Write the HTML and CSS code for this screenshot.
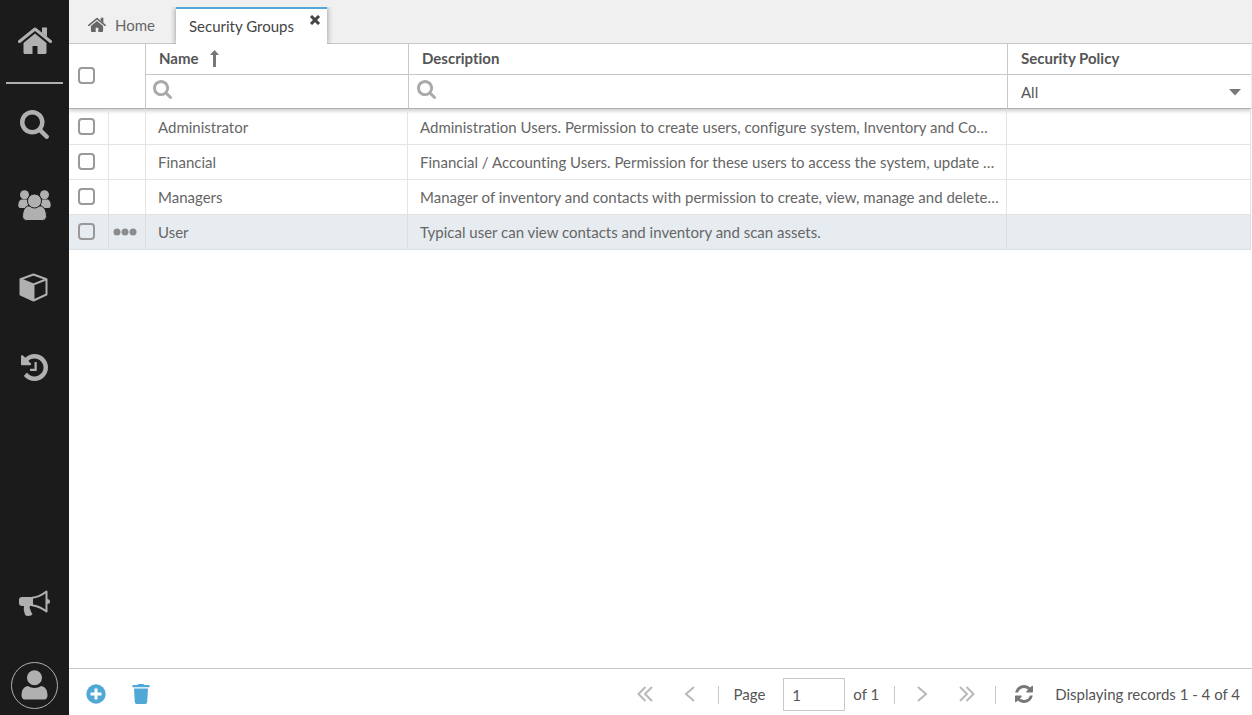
FILE: index.html
```
<!DOCTYPE html>
<html lang="en">
  <head>
    <meta charset="utf-8" />
    <meta name="viewport" content="width=device-width, initial-scale=1" />
    <title>Security Groups</title>
    <link rel="stylesheet" href="styles.css">
  </head>

  <body>
    <!-- shared icons -->
    <svg class="sprite" aria-hidden="true">
      <symbol id="icon-home" viewBox="0 0 34 28">
        <path d="M24 0.5h5v9.5l-5-4z" />
        <path d="M1.5 14.5L17 2l15.500 12.500" fill="none" stroke="currentColor" stroke-width="3" stroke-linecap="round" stroke-linejoin="round" />
        <path d="M17 6.500l11.500 9.500v9.500q0 1.500-1.500 1.500h-7.500v-8h-5v8H7q-1.500 0-1.500-1.500V16z" />
      </symbol>
      <symbol id="icon-search" viewBox="64 128 1664 1664">
        <path d="M1216 832q0-185-131.5-316.5t-316.5-131.5-316.5 131.5-131.5 316.5 131.5 316.5 316.5 131.5 316.5-131.5 131.5-316.5zm512 832q0 52-38 90t-90 38q-54 0-90-38l-343-342q-179 124-399 124-143 0-273.5-55.5t-225-150-150-225-55.5-273.5 55.5-273.5 150-225 225-150 273.5-55.5 273.5 55.5 225 150 150 225 55.5 273.5q0 220-124 399l343 343q37 37 37 90z" />
      </symbol>
    </svg>

    <div class="app">
      <nav class="sidebar" aria-label="Main">
        <a class="side-item" href="#" aria-label="Home">
          <svg width="34" height="28"><use href="#icon-home" /></svg>
        </a>
        <hr class="side-line" />
        <a class="side-item" href="#" aria-label="Search">
          <svg width="29" height="29"><use href="#icon-search" /></svg>
        </a>
        <a class="side-item" href="#" aria-label="Users">
          <svg width="34" height="31" viewBox="0 0 34 31">
            <circle cx="6.500" cy="4.800" r="4.500" />
            <circle cx="26.500" cy="4.800" r="4.500" />
            <path d="M3 9.500h7v8.500H2.500Q0.300 18 0.300 15.500 0.300 11 3 9.500z" />
            <path d="M30 9.500h-7v8.500h7.500q2.200 0 2.200-2.500 0-4.500-2.700-6z" />
            <g class="cutout">
              <path d="M9.500 16h14q5 2.500 5 10.500 0 4-4 4h-16q-4 0-4-4 0-8 5-10.500z" />
              <circle cx="16.500" cy="11" r="7" />
            </g>
          </svg>
        </a>
        <a class="side-item" href="#" aria-label="Inventory">
          <svg width="31" height="30" viewBox="0 -1 31 30">
            <path d="M14.500 1.500l13 4.800v15.200l-13 6-13-6V6.300z" fill="none" stroke="currentColor" stroke-width="2" stroke-linejoin="round" />
            <path d="M1.500 6.300l13 5.200v16l-13-6z" />
            <path d="M1.500 6.300l13 5.200 13-5.200M14.500 11.500v16" fill="none" stroke="currentColor" stroke-width="2" />
          </svg>
        </a>
        <a class="side-item" href="#" aria-label="History">
          <svg width="27" height="27" viewBox="128 128 1536 1536">
            <path d="M1664 896q0 156-61 298t-164 245-245 164-298 61q-172 0-327-72.5t-264-204.5q-7-10-6.5-22.5t8.500-20.5l137-138q10-9 25-9 16 2 23 12 73 95 179 147t225 52q104 0 198.500-40.5t163.500-109.5 109.500-163.5 40.500-198.5-40.500-198.5-109.500-163.5-163.500-109.5-198.500-40.5q-98 0-188 35.500t-160 101.500l137 138q31 30 14 69-17 40-59 40h-448q-26 0-45-19t-19-45v-448q0-42 40-59 39-17 69 14l130 129q107-101 244.500-156.500t284.500-55.500q156 0 298 61t245 164 164 245 61 298zm-640-288v448q0 14-9 23t-23 9h-320q-14 0-23-9t-9-23v-64q0-14 9-23t23-9h224v-352q0-14 9-23t23-9h64q14 0 23 9t9 23z" />
          </svg>
        </a>
        <a class="side-item side-news" href="#" aria-label="Announcements">
          <svg width="31" height="27" viewBox="0 0 31 27">
            <path d="M3 7h11v9H3q-3 0-3-3v-3q0-3 3-3z" />
            <path d="M13 7.800Q20.500 7 27.500 1.500v20Q20.500 16 13 15.200" fill="none" stroke="currentColor" stroke-width="2" stroke-linejoin="round" />
            <path d="M5 15h6q-1 3 0.500 5 0 1.500 2 4-1 2-4 2t-3.500-1.500Q4 20 5 15zM28 9q3 0 3 2.500T28 14z" />
          </svg>
        </a>
        <button class="avatar" type="button" aria-label="My account">
          <svg width="27" height="31" viewBox="0 0 28 32">
            <circle cx="14" cy="8" r="7.800" />
            <path d="M7 16.500q7 4 14 0 6.500 1.500 6.500 9 0 5-3.500 5H4q-3.500 0-3.500-5 0-7.500 6.500-9z" />
          </svg>
        </button>
      </nav>

      <main class="content">
        <div class="tabs">
          <a class="tab" href="#">
            <svg width="18" height="16"><use href="#icon-home" /></svg>
            Home
          </a>
          <div class="tab tab-active">
            <span>Security Groups</span>
            <button class="tab-close" type="button" aria-label="Close tab">
              <svg width="12" height="10" viewBox="0 0 12 10">
                <path d="M2 1l8 8M10 1L2 9" stroke="currentColor" stroke-width="3" />
              </svg>
            </button>
          </div>
        </div>

        <div class="grid">
          <table>
            <colgroup>
              <col class="col-check" />
              <col class="col-menu" />
              <col class="col-name" />
              <col />
              <col class="col-policy" />
            </colgroup>
            <thead>
              <tr class="titles">
                <th class="check-all" colspan="2" rowspan="2">
                  <input type="checkbox" aria-label="Select all" />
                </th>
                <th class="first">
                  <div class="title">
                    Name
                    <svg class="sort" width="9" height="17" viewBox="0 0 9 17">
                      <path d="M4.500 0L9 5H6v12H3V5H0z" />
                    </svg>
                  </div>
                </th>
                <th>Description</th>
                <th>Security Policy</th>
              </tr>
              <tr class="filters">
                <td class="first">
                  <label class="filter">
                    <svg width="19" height="19"><use href="#icon-search" /></svg>
                    <input type="text" aria-label="Filter by name" />
                  </label>
                </td>
                <td>
                  <label class="filter">
                    <svg width="19" height="19"><use href="#icon-search" /></svg>
                    <input type="text" aria-label="Filter by description" />
                  </label>
                </td>
                <td>
                  <div class="policy">
                    <select aria-label="Filter by security policy">
                      <option>All</option>
                    </select>
                    <svg width="12" height="7" viewBox="0 0 12 7"><path d="M0 0h12L6 6.500z" /></svg>
                  </div>
                </td>
              </tr>
            </thead>
            <tbody>
              <tr>
                <td class="check"><input type="checkbox" aria-label="Administrator" /></td>
                <td></td>
                <td>Administrator</td>
                <td>Administration Users. Permission to create users, configure system, Inventory and Co…</td>
                <td></td>
              </tr>
              <tr>
                <td class="check"><input type="checkbox" aria-label="Financial" /></td>
                <td></td>
                <td>Financial</td>
                <td>Financial / Accounting Users. Permission for these users to access the system, update …</td>
                <td></td>
              </tr>
              <tr>
                <td class="check"><input type="checkbox" aria-label="Managers" /></td>
                <td></td>
                <td>Managers</td>
                <td>Manager of inventory and contacts with permission to create, view, manage and delete…</td>
                <td></td>
              </tr>
              <tr class="current">
                <td class="check"><input type="checkbox" aria-label="User" /></td>
                <td class="menu">
                  <button type="button" aria-label="Row menu">
                    <svg width="24" height="8" viewBox="0 0 24 8">
                      <circle cx="4" cy="4" r="3.500" />
                      <circle cx="12" cy="4" r="3.500" />
                      <circle cx="20" cy="4" r="3.500" />
                    </svg>
                  </button>
                </td>
                <td>User</td>
                <td>Typical user can view contacts and inventory and scan assets.</td>
                <td></td>
              </tr>
            </tbody>
          </table>
        </div>

        <footer class="toolbar">
          <div class="actions">
            <button type="button" aria-label="Add">
              <svg width="20" height="20" viewBox="0 0 20 20">
                <circle cx="10" cy="10" r="9.700" />
                <path d="M10 4.500v11M4.500 10h11" stroke="#fff" stroke-width="3" />
              </svg>
            </button>
            <button type="button" aria-label="Delete">
              <svg width="18" height="20" viewBox="0 0 18 20">
                <path d="M0.500 1h5L6.500 0h5l1 1h5v2.300H0.500zM2 4.500h14l-0.800 13.500q-0.200 2-2 2H4.800q-1.800 0-2-2z" />
              </svg>
            </button>
          </div>
          <div class="pager">
            <button class="step" type="button" aria-label="First page">
              <svg width="16" height="16" viewBox="0 0 16 16"><path d="M8.500 1l-7 7 7 7M15 1L8 8l7 7" /></svg>
            </button>
            <button class="step" type="button" aria-label="Previous page">
              <svg width="16" height="16" viewBox="0 0 16 16"><path d="M12 1L4 8l8 7" /></svg>
            </button>
            <span class="sep"></span>
            <label class="page" for="page">Page</label>
            <input class="page-number" id="page" type="text" value="1" />
            <span class="page-count">of 1</span>
            <span class="sep"></span>
            <button class="step" type="button" aria-label="Next page">
              <svg width="16" height="16" viewBox="0 0 16 16"><path d="M4 1l8 7-8 7" /></svg>
            </button>
            <button class="step" type="button" aria-label="Last page">
              <svg width="16" height="16" viewBox="0 0 16 16"><path d="M1 1l7 7-7 7M7.500 1l7 7-7 7" /></svg>
            </button>
            <span class="sep"></span>
            <button class="refresh" type="button" aria-label="Refresh">
              <svg width="18" height="18" viewBox="128 128 1536 1536">
                <path d="M1639 1056q0 5-1 7-64 268-268 434.500t-478 166.500q-146 0-282.500-55t-243.500-157l-129 129q-19 19-45 19t-45-19-19-45v-448q0-26 19-45t45-19h448q26 0 45 19t19 45-19 45l-137 137q71 66 161 102t187 36q134 0 250-65t186-179q11-17 53-117 8-23 30-23h192q13 0 22.500 9.500t9.500 22.500zm25-800v448q0 26-19 45t-45 19h-448q-26 0-45-19t-19-45 19-45l138-138q-148-137-349-137-134 0-250 65t-186 179q-11 17-53 117-8 23-30 23h-199q-13 0-22.500-9.500t-9.500-22.500v-7q65-268 270-434.500t480-166.500q146 0 284 55.500t245 156.500l130-129q19-19 45-19t45 19 19 45z" />
              </svg>
            </button>
            <span>Displaying records 1 - 4 of 4</span>
          </div>
        </footer>
      </main>
    </div>
  </body>
</html>
```
FILE: styles.css
```
* {
  box-sizing: border-box;
}
body {
  margin: 0;
  font: 15px/20px Lato, sans-serif;
  font-variant-ligatures: none;
  color: #555;
}
svg {
  display: block;
  flex: none;
  fill: currentColor;
}
button {
  display: block;
  padding: 0;
  border: 0;
  background: none;
  color: inherit;
  cursor: pointer;
}
input,
select {
  font: inherit;
  color: inherit;
}
.sprite {
  display: none;
}
.app {
  display: flex;
  height: 100vh;
}

/* sidebar */
.sidebar {
  flex: none;
  display: flex;
  flex-direction: column;
  align-items: center;
  width: 69px;
  padding-bottom: 6px;
  background-color: #1b1b1b;
  color: #b0b0b0;
}
.side-item {
  display: flex;
  align-items: center;
  justify-content: center;
  width: 100%;
  height: 81px;
  color: inherit;
}
.side-line {
  width: 57px;
  height: 2px;
  margin: 1px 0 0;
  border: 0;
  background-color: #b0b0b0;
}
.side-news {
  margin-top: auto;
  margin-bottom: 18px;
}
.cutout {
  stroke: #1b1b1b;
  stroke-width: 1;
}
.avatar {
  display: flex;
  align-items: center;
  justify-content: center;
  width: 47px;
  height: 47px;
  border: 1px solid #b0b0b0;
  border-radius: 50%;
}

/* tabs */
.content {
  flex: 1;
  display: flex;
  flex-direction: column;
  min-width: 0;
}
.tabs {
  display: flex;
  align-items: flex-end;
  height: 44px;
  padding-left: 6px;
  border-bottom: 1px solid #c8c8c8;
  background-color: #f0f0f0;
}
.tab {
  display: flex;
  align-items: center;
  gap: 9px;
  height: 36px;
  padding: 0 21px 0 13px;
  color: #666;
  text-decoration: none;
}
.tab-active {
  gap: 15px;
  height: 37px;
  margin-bottom: -1px;
  padding: 0 6px 0 13px;
  border-top: 2px solid #4fa8d5;
  background-color: #fff;
  box-shadow: 0 0 6px rgba(0, 0, 0, 0.4);
  clip-path: inset(0 -6px 0 -6px);
  color: #444;
}
.tab-active span {
  padding-bottom: 2px;
}
.tab-close {
  align-self: flex-start;
  margin-top: 6px;
}

/* grid */
.grid {
  flex: 1;
  min-height: 0;
  padding-right: 1px;
  overflow: auto;
}
table {
  width: 100%;
  table-layout: fixed;
  border-collapse: separate;
  border-spacing: 0;
}
.col-check {
  width: 40px;
}
.col-menu {
  width: 37px;
}
.col-name {
  width: 262px;
}
.col-policy {
  width: 244px;
}
thead {
  box-shadow: 0 2px 4px rgba(0, 0, 0, 0.2);
}
th,
td {
  padding: 0;
  text-align: left;
}
.titles th {
  height: 31px;
  padding: 0 0 2px 13px;
  border-left: 1px solid #c8c8c8;
  border-bottom: 1px solid #c8c8c8;
  font-weight: bold;
}
.filters td {
  height: 34px;
  border-left: 1px solid #c8c8c8;
  border-bottom: 1px solid #b0b0b0;
}
.titles .first,
.filters .first {
  border-left: 0;
}
.titles .check-all {
  padding-left: 9px;
  border-left: 0;
  border-right: 1px solid #c8c8c8;
  border-bottom-color: #b0b0b0;
}
.title {
  display: flex;
  align-items: center;
  gap: 11px;
}
.sort {
  color: #777;
}
.filter {
  display: flex;
  align-items: center;
  gap: 6px;
  padding: 0 8px 4px;
  color: #aaa;
}
.filters .first .filter {
  padding-left: 7px;
}
.filter input {
  flex: 1;
  min-width: 0;
  height: 24px;
  border: 0;
  background: none;
  color: #555;
}
.policy {
  display: flex;
  align-items: center;
  padding: 0 10px 0 13px;
}
.policy svg {
  margin-top: 2px;
  color: #777;
}
.policy select {
  flex: 1;
  appearance: none;
  padding: 0;
  border: 0;
  background: none;
}
input[type="checkbox"] {
  appearance: none;
  display: block;
  width: 17px;
  height: 17px;
  margin: 0;
  border: 2px solid #999;
  border-radius: 4px;
  background-color: #fff;
}
tbody td {
  height: 35px;
  padding: 0 6px 0 12px;
  border-right: 1px solid #e4e4e4;
  border-bottom: 1px solid #e4e4e4;
  overflow: hidden;
  white-space: nowrap;
  text-overflow: ellipsis;
  color: #666;
}
tbody tr:first-child td {
  height: 36px;
}
tbody .check {
  padding: 0 0 1px 9px;
}
tbody .menu {
  padding: 0 0 1px 4px;
  color: #8c8c8c;
}
.current td {
  border-color: #d9dfe3;
  background-color: #e6ecf0;
}
.current input[type="checkbox"] {
  background: none;
}

/* bottom toolbar */
.toolbar {
  display: flex;
  align-items: center;
  justify-content: space-between;
  padding: 9px 12px 4px 17px;
  border-top: 1px solid #c8c8c8;
}
.actions {
  display: flex;
  gap: 26px;
  padding-bottom: 2px;
  color: #4fa8d5;
}
.pager {
  display: flex;
  align-items: center;
}
.pager button {
  padding-bottom: 1px;
}
.pager > label,
.pager > span {
  padding-bottom: 2px;
}
.step {
  margin-right: 29px;
  color: #b8b8b8;
}
.step + .sep {
  margin-left: -9px;
}
.step path {
  fill: none;
  stroke: currentColor;
  stroke-width: 2;
}
.sep {
  width: 1px;
  height: 18px;
  background-color: #c8c8c8;
}
.sep + .step {
  margin-left: 19px;
}
.page {
  margin: 0 18px 0 15px;
}
.page-number {
  width: 62px;
  height: 33px;
  padding: 0 8px;
  border: 1px solid #c8c8c8;
}
.page-count {
  margin: 0 15px 0 8px;
}
.refresh {
  margin: 0 22px 0 19px;
  color: #777;
}
```
